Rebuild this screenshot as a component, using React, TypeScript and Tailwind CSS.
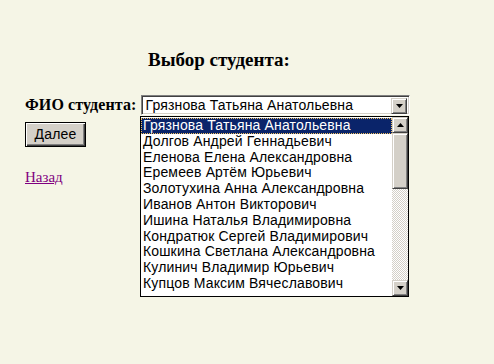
const students = [
  "Грязнова Татьяна Анатольевна",
  "Долгов Андрей Геннадьевич",
  "Еленова Елена Александровна",
  "Еремеев Артём Юрьевич",
  "Золотухина Анна Александровна",
  "Иванов Антон Викторович",
  "Ишина Наталья Владимировна",
  "Кондратюк Сергей Владимирович",
  "Кошкина Светлана Александровна",
  "Кулинич Владимир Юрьевич",
  "Купцов Максим Вячеславович",
];

function Arrow({ up }: { up?: boolean }) {
  return (
    <svg width="7" height="4" viewBox="0 0 7 4" className="block">
      {up ? <path d="M3.5 0 L7 4 L0 4 Z" fill="#000" /> : <path d="M0 0 L7 0 L3.5 4 Z" fill="#000" />}
    </svg>
  );
}

function ScrollButton({ up }: { up?: boolean }) {
  return (
    <div className="w-[16px] h-[16px] bg-[#d4d0c8] border border-t-[#d4d0c8] border-l-[#d4d0c8] border-r-[#404040] border-b-[#404040] shadow-[inset_1px_1px_0_#fff,inset_-1px_-1px_0_#808080] flex items-center justify-center">
      <Arrow up={up} />
    </div>
  );
}

export default function App() {
  return (
    <div className="w-[494px] h-[364px] bg-[#f5f5e6] relative font-['Liberation_Serif',serif] text-black">
      <div className="pt-[49px] pl-[148px] text-[19px] font-bold leading-[22px]">Выбор студента:</div>

      <div className="pl-[25px] pt-[24px] flex items-center gap-[5px] h-[44px]">
        <span className="text-[16px] font-bold tracking-[0.1px]">ФИО студента:</span>
        <div className="relative w-[269px] h-[20px] bg-white border border-t-[#808080] border-l-[#808080] border-r-white border-b-white shadow-[inset_1px_1px_0_#404040,inset_-1px_-1px_0_#d4d0c8] flex items-center font-['Liberation_Sans',sans-serif] text-[14px] tracking-[0.15px] pl-[3px]">
          <span className="leading-[16px]">Грязнова Татьяна Анатольевна</span>
          <div className="absolute right-[2px] top-[2px]">
            <ScrollButton />
          </div>
        </div>
      </div>

      <div className="pl-[25px] pt-[7px]">
        <button className="w-[61px] h-[25px] bg-[#d4d0c8] border border-black shadow-[inset_1px_1px_0_#fff,inset_-1px_-1px_0_#404040,inset_-2px_-2px_0_#808080] font-['Liberation_Sans',sans-serif] text-[14px] tracking-[0.15px]">
          Далее
        </button>
      </div>

      <div className="pl-[25px] pt-[19px] text-[15px]">
        <a href="#" className="text-[#800080] underline">Назад</a>
      </div>

      <div className="absolute left-[140px] top-[116px] w-[269px] h-[181px] bg-white border border-black flex font-['Liberation_Sans',sans-serif] text-[14px] tracking-[0.15px]">
        <div className="flex-1 flex flex-col pt-[1px]">
          {students.map((s, i) => (
            <div
              key={s}
              className={`h-[15.8px] leading-[15px] pl-[2px] whitespace-nowrap overflow-hidden ${
                i === 0 ? "bg-[#0a246a] text-white outline outline-1 outline-dotted outline-[#f0c060] -outline-offset-1" : ""
              }`}
            >
              {s}
            </div>
          ))}
        </div>
        <div className="w-[16px] flex flex-col">
          <ScrollButton up />
          <div className="w-[16px] h-[56px] bg-[#d4d0c8] border border-t-[#d4d0c8] border-l-[#d4d0c8] border-r-[#404040] border-b-[#404040] shadow-[inset_1px_1px_0_#fff,inset_-1px_-1px_0_#808080]" />
          <div className="flex-1 bg-[repeating-conic-gradient(#d4d0c8_0_25%,#fff_0_50%)] bg-[length:2px_2px]" />
          <ScrollButton />
        </div>
      </div>
    </div>
  );
}
